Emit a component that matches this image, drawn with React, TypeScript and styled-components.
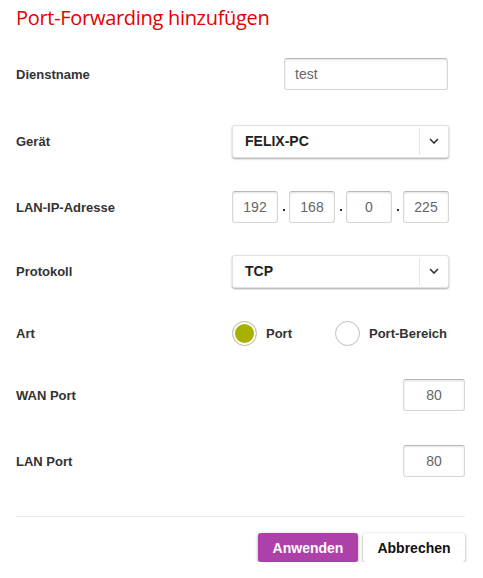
import styled, { createGlobalStyle } from 'styled-components';

const GlobalStyle = createGlobalStyle`
  body {
    margin: 0;
    background: #ffffff;
    font-family: "Liberation Sans", Arial, sans-serif;
  }
`;

const Container = styled.div`
  width: 449px;
  padding: 6px 18px 0 16px;
`;

const Title = styled.h1`
  margin: 0 0 13px;
  font-size: 20px;
  line-height: 24px;
  font-weight: 400;
  color: #e60000;
  font-family: "Open Sans", "Liberation Sans", sans-serif;
  letter-spacing: -0.3px;
`;

// rows are not evenly spaced in the original, so each gets its own gap
const Row = styled.div<{ $gap?: number }>`
  display: flex;
  align-items: center;
  height: 62px;
  margin-top: ${(p) => p.$gap ?? 0}px;
`;

const Label = styled.div`
  flex: 0 0 216px;
  font-family: "Liberation Sans", Arial, sans-serif;
  font-size: 13px;
  font-weight: 700;
  color: #333;
`;

const Control = styled.div<{ $pad?: number }>`
  flex: 1;
  display: flex;
  align-items: center;
  justify-content: flex-end;
  padding-right: ${(p) => p.$pad ?? 0}px;
`;

const TextInput = styled.input<{ $w: number; $center?: boolean }>`
  box-sizing: border-box;
  width: ${(p) => p.$w}px;
  height: 32px;
  padding: 0 10px;
  border: 1px solid #d6d6d6;
  border-top-color: #b8b8b8;
  border-radius: 3px;
  box-shadow: inset 0 1px 2px rgba(0, 0, 0, 0.12);
  font-family: "Liberation Sans", Arial, sans-serif;
  font-size: 14px;
  color: #666;
  text-align: ${(p) => (p.$center ? 'center' : 'left')};
  outline: none;
`;

const Select = styled.div`
  box-sizing: border-box;
  width: 217px;
  height: 33px;
  display: flex;
  align-items: center;
  border: 1px solid #e2e2e2;
  border-radius: 3px;
  box-shadow: 0 1px 2px rgba(0, 0, 0, 0.35);
  background: #fff;
`;

const SelectValue = styled.span`
  flex: 1;
  padding-left: 12px;
  font-size: 14px;
  font-weight: 700;
  color: #222;
`;

const SelectArrow = styled.span`
  width: 28px;
  height: 27px;
  border-left: 1px solid #e4e4e4;
  display: flex;
  align-items: center;
  justify-content: center;
`;

const IpGroup = styled.div`
  display: flex;
  align-items: flex-end;
`;

const IpPart = styled.span`
  display: flex;
  align-items: flex-end;
`;

const IpDot = styled.span`
  width: 2px;
  height: 2px;
  margin: 0 4.5px 12px;
  background: #333;
`;

const RadioGroup = styled.div`
  display: flex;
  align-items: center;
  width: 233px;
`;

const RadioItem = styled.label<{ $w?: number }>`
  display: flex;
  align-items: center;
  gap: 9px;
  width: ${(p) => (p.$w ? `${p.$w}px` : 'auto')};
  font-size: 13px;
  font-weight: 700;
  color: #333;
`;

const RadioCircle = styled.span<{ $on?: boolean }>`
  box-sizing: border-box;
  width: 25px;
  height: 25px;
  border-radius: 50%;
  border: 1px solid ${(p) => (p.$on ? '#c4c4c4' : '#bdbdbd')};
  background: ${(p) => (p.$on ? '#a8b000' : '#fff')};
  box-shadow: ${(p) => (p.$on ? 'inset 0 0 0 2px #fff' : 'none')};
`;

const Divider = styled.hr`
  margin: 24px 0 16px;
  border: 0;
  border-top: 1px solid #ececec;
`;

const Footer = styled.div`
  display: flex;
  justify-content: flex-end;
  gap: 5px;
`;

const Button = styled.button<{ $primary?: boolean; $w: number }>`
  width: ${(p) => p.$w}px;
  height: 29px;
  border: 0;
  border-radius: 3px;
  font-family: "Liberation Sans", Arial, sans-serif;
  font-size: 14px;
  font-weight: 700;
  background: ${(p) => (p.$primary ? '#ad41a9' : '#fff')};
  color: ${(p) => (p.$primary ? '#fff' : '#111')};
  box-shadow: 0 1px 3px rgba(0, 0, 0, 0.4);
`;

const Chevron = () => (
  <svg width="10" height="6" viewBox="0 0 10 6">
    <path d="M1 1l4 4 4-4" fill="none" stroke="#333" strokeWidth="1.6" />
  </svg>
);

export default function App() {
  const ip = ['192', '168', '0', '225'];
  return (
    <Container>
      <GlobalStyle />
      <Title>Port-Forwarding hinzufügen</Title>
      <Row>
        <Label>Dienstname</Label>
        <Control $pad={17}>
          <TextInput $w={164} defaultValue="test" />
        </Control>
      </Row>
      <Row $gap={5}>
        <Label>Gerät</Label>
        <Control $pad={16}>
          <Select>
            <SelectValue>FELIX-PC</SelectValue>
            <SelectArrow>
              <Chevron />
            </SelectArrow>
          </Select>
        </Control>
      </Row>
      <Row $gap={4}>
        <Label>LAN-IP-Adresse</Label>
        <Control $pad={17}>
          <IpGroup>
            {ip.map((part, i) => (
              <IpPart key={i}>
                {i > 0 && <IpDot />}
                <TextInput $w={46} $center defaultValue={part} />
              </IpPart>
            ))}
          </IpGroup>
        </Control>
      </Row>
      <Row $gap={2}>
        <Label>Protokoll</Label>
        <Control $pad={16}>
          <Select>
            <SelectValue>TCP</SelectValue>
            <SelectArrow>
              <Chevron />
            </SelectArrow>
          </Select>
        </Control>
      </Row>
      <Row>
        <Label>Art</Label>
        <Control>
          <RadioGroup>
            <RadioItem $w={103}>
              <RadioCircle $on />
              Port
            </RadioItem>
            <RadioItem>
              <RadioCircle />
              Port-Bereich
            </RadioItem>
          </RadioGroup>
        </Control>
      </Row>
      <Row>
        <Label>WAN Port</Label>
        <Control>
          <TextInput $w={62} $center defaultValue="80" />
        </Control>
      </Row>
      <Row $gap={4}>
        <Label>LAN Port</Label>
        <Control>
          <TextInput $w={62} $center defaultValue="80" />
        </Control>
      </Row>
      <Divider />
      <Footer>
        <Button $primary $w={100}>
          Anwenden
        </Button>
        <Button $w={102}>Abbrechen</Button>
      </Footer>
    </Container>
  );
}
